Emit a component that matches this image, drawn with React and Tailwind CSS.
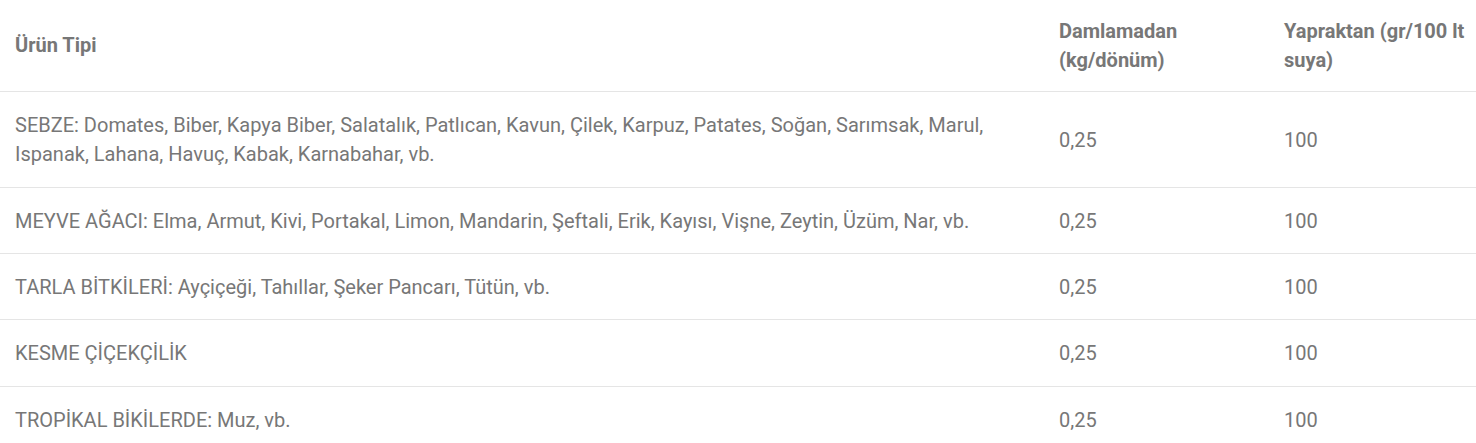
const rows = [
  ['SEBZE: Domates, Biber, Kapya Biber, Salatalık, Patlıcan, Kavun, Çilek, Karpuz, Patates, Soğan, Sarımsak, Marul, Ispanak, Lahana, Havuç, Kabak, Karnabahar, vb.', '0,25', '100'],
  ['MEYVE AĞACI: Elma, Armut, Kivi, Portakal, Limon, Mandarin, Şeftali, Erik, Kayısı, Vişne, Zeytin, Üzüm, Nar, vb.', '0,25', '100'],
  ['TARLA BİTKİLERİ: Ayçiçeği, Tahıllar, Şeker Pancarı, Tütün, vb.', '0,25', '100'],
  ['KESME ÇİÇEKÇİLİK', '0,25', '100'],
  ['TROPİKAL BİKİLERDE: Muz, vb.', '0,25', '100'],
];

export default function App() {
  return (
    <div className="min-h-screen bg-white font-['Roboto',sans-serif] text-[20px] leading-[28.7px] text-[#777]">
      <table className="w-full border-collapse text-left">
        <colgroup>
          <col />
          <col className="w-[225px]" />
          <col className="w-[207px]" />
        </colgroup>
        <thead>
          <tr className="border-b border-[#e5e5e5]">
            <th className="px-[15px] py-[17px] align-middle font-bold">Ürün Tipi</th>
            <th className="px-[15px] py-[17px] align-middle font-bold">Damlamadan (kg/dönüm)</th>
            <th className="pl-[15px] pr-[4px] py-[17px] align-middle font-bold">Yapraktan (gr/100 lt suya)</th>
          </tr>
        </thead>
        <tbody>
          {rows.map((r, i) => (
            <tr key={i} className="border-b border-[#e5e5e5]">
              <td className="px-[15px] pt-[19px] pb-[17.7px] align-middle">{r[0]}</td>
              <td className="px-[15px] pt-[19px] pb-[17.7px] align-middle">{r[1]}</td>
              <td className="px-[15px] pt-[19px] pb-[17.7px] align-middle">{r[2]}</td>
            </tr>
          ))}
        </tbody>
      </table>
    </div>
  );
}
